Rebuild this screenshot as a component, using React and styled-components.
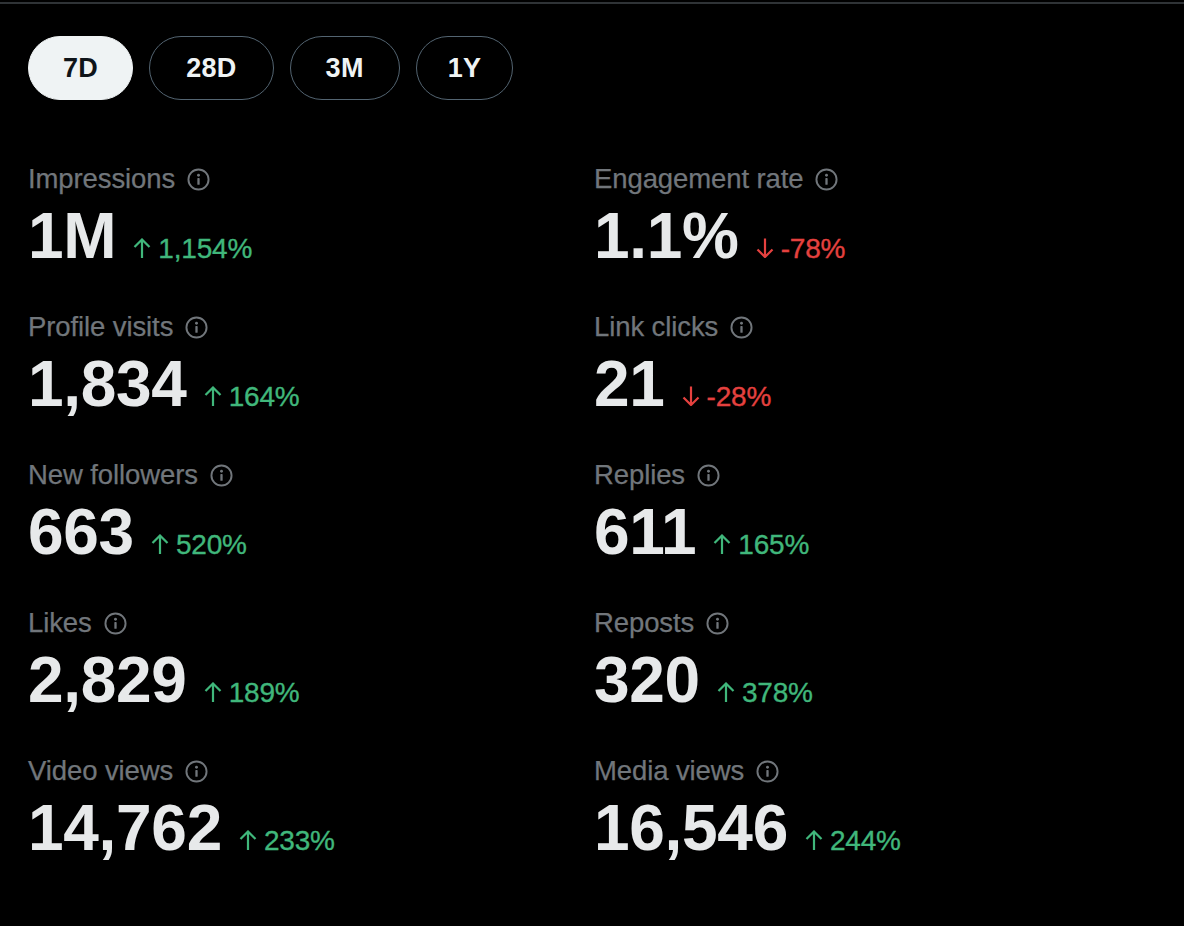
import React from "react";
import styled, { createGlobalStyle } from "styled-components";

const Global = createGlobalStyle`
  html, body { margin: 0; padding: 0; background: #000; }
  body { font-family: "Liberation Sans", Arial, sans-serif; color: #e7e9ea; }
`;

const Page = styled.div`
  min-height: 926px;
  background: #000;
  border-top: 2px solid #2f3336;
  margin-top: 2px;
  padding: 32px 28px 0 28px;
  box-sizing: border-box;
`;

const Tabs = styled.div`
  display: flex;
  gap: 16px;
`;

const Tab = styled.button`
  height: 64px;
  padding: 0 ${(p) => p.$pad}px;
  border-radius: 32px;
  font-family: "Liberation Sans", Arial, sans-serif;
  font-weight: 700;
  font-size: 27px;
  letter-spacing: 0.3px;
  cursor: pointer;
  box-sizing: border-box;
  background: ${(p) => (p.$active ? "#eff3f4" : "transparent")};
  color: ${(p) => (p.$active ? "#0f1419" : "#eff3f4")};
  border: ${(p) => (p.$active ? "1.5px solid #eff3f4" : "1.5px solid #536471")};
`;

const Grid = styled.div`
  display: grid;
  grid-template-columns: 566px 1fr;
  margin-top: 63px;
`;

const Metric = styled.div`
  display: flex;
  flex-direction: column;
  height: 148px;
`;

const LabelRow = styled.div`
  display: flex;
  align-items: center;
  gap: 12px;
  height: 32px;
  font-size: 27.5px;
  color: #71767b;
  letter-spacing: -0.1px;
  -webkit-text-stroke: 0.25px #71767b;
`;

const ValueRow = styled.div`
  display: flex;
  align-items: baseline;
  margin-top: 5px;
`;

const Value = styled.span`
  font-weight: 700;
  font-size: 64px;
  line-height: 72px;
  letter-spacing: -0.3px;
  color: #e7e9ea;
`;

const Change = styled.span`
  margin-left: 16px;
  font-size: 28px;
  letter-spacing: -0.2px;
  color: ${(p) => (p.$down ? "#e5413f" : "#40b77b")};
  -webkit-text-stroke: 0.35px currentColor;
`;

const ArrowSvg = styled.svg`
  display: inline-block;
  vertical-align: baseline;
  width: 20px;
  height: 20px;
  margin-right: 6px;
`;

const InfoSvg = styled.svg`
  width: 23px;
  height: 23px;
  flex: none;
`;

const InfoIcon = () => (
  <InfoSvg viewBox="0 0 24 24" fill="none">
    <circle cx="12" cy="12" r="10.5" stroke="#71767b" strokeWidth="2" />
    <circle cx="12" cy="7.6" r="1.5" fill="#71767b" />
    <rect x="10.8" y="10.4" width="2.4" height="7.2" rx="0.7" fill="#71767b" />
  </InfoSvg>
);

const Arrow = ({ down }) => (
  <ArrowSvg viewBox="0 0 20 20" fill="none">
    {down ? (
      <path d="M10 0.5v18M2.5 11.5l7.5 7.5 7.5-7.5" stroke="currentColor" strokeWidth="2.2" />
    ) : (
      <path d="M10 20V1.5M2.5 9l7.5-7.5 7.5 7.5" stroke="currentColor" strokeWidth="2.2" />
    )}
  </ArrowSvg>
);

const metrics = [
  ["Impressions", "1M", "1,154%", false],
  ["Engagement rate", "1.1%", "-78%", true],
  ["Profile visits", "1,834", "164%", false],
  ["Link clicks", "21", "-28%", true],
  ["New followers", "663", "520%", false],
  ["Replies", "611", "165%", false],
  ["Likes", "2,829", "189%", false],
  ["Reposts", "320", "378%", false],
  ["Video views", "14,762", "233%", false],
  ["Media views", "16,546", "244%", false],
];

const tabs = [
  ["7D", 34],
  ["28D", 36],
  ["3M", 35],
  ["1Y", 31],
];

export default function App() {
  return (
    <>
      <Global />
      <Page>
        <Tabs>
          {tabs.map(([t, pad], i) => (
            <Tab key={t} $active={i === 0} $pad={pad}>
              {t}
            </Tab>
          ))}
        </Tabs>
        <Grid>
          {metrics.map(([label, value, change, down]) => (
            <Metric key={label}>
              <LabelRow>
                {label}
                <InfoIcon />
              </LabelRow>
              <ValueRow>
                <Value>{value}</Value>
                <Change $down={down}>
                  <Arrow down={down} />
                  {change}
                </Change>
              </ValueRow>
            </Metric>
          ))}
        </Grid>
      </Page>
    </>
  );
}
